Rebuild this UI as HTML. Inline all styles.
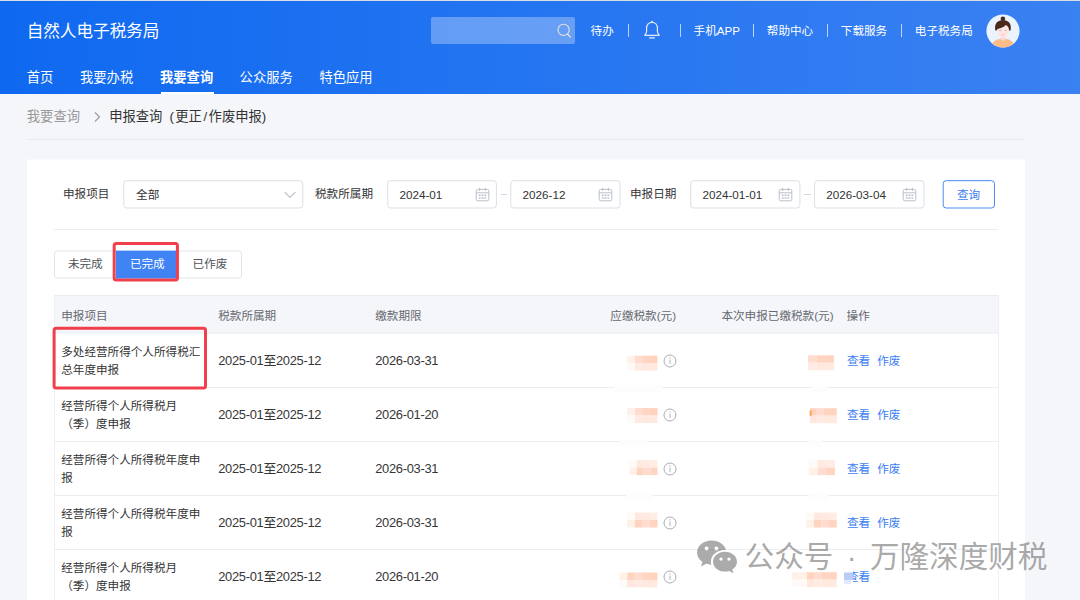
<!DOCTYPE html>
<html lang="zh-CN">
<head>
<meta charset="utf-8">
<title>自然人电子税务局</title>
<style>
*{box-sizing:border-box;margin:0;padding:0}
html,body{width:1080px;height:600px;overflow:hidden;background:#f5f6fa}
body{position:relative;font-family:"Liberation Sans","Noto Sans CJK SC",sans-serif;font-size:11.6px;color:#333}
.abs{position:absolute;white-space:nowrap}
.topline{left:0;top:0;width:1080px;height:1px;background:#d9dde4}
.hdr{left:0;top:1px;width:1080px;height:93px;background:linear-gradient(90deg,#0f69f0 0%,#3a81f2 100%)}
.logo{left:26.7px;top:20px;font-size:16.6px;line-height:24px;color:#fff}
.nav{top:66.5px;font-size:13.3px;line-height:22px;color:#fff}
.nav.on{font-weight:bold}
.navline{left:160.5px;top:91.6px;width:53.2px;height:2.4px;background:#fff}
.search{left:431.4px;top:17.4px;width:143.2px;height:26.6px;border-radius:2px;background:rgba(255,255,255,.3)}
.tl{top:22.4px;font-size:11.6px;line-height:18px;color:#fff}
.sep{top:24px;width:1px;height:13.4px;background:rgba(255,255,255,.68)}
.crumb{top:106.4px;font-size:13.3px;line-height:22px}
.hr1{left:27px;top:139px;width:998px;height:1px;background:#e6e8ee}
.card{left:27px;top:159px;width:998px;height:441px;background:linear-gradient(#f9fafc,#f9fafc) 0 0/100% 1px no-repeat #fff}
.lbl{top:183.8px;font-size:11.6px;line-height:20px;color:#333}
.itx{top:185px;font-size:11.7px;line-height:20px;color:#333}
.hr2{left:54px;top:229px;width:944px;height:1px;background:#ebedf2}
.tabt{top:254px;font-size:11.6px;line-height:20px;color:#505258;width:62px;text-align:center}
.red{border:3px solid #f13d48;border-radius:3px}
.th{left:54px;top:295px;width:944px;height:38px;background:#f5f6fa;border-top:1px solid #ebedf2;border-bottom:1px solid #ebedf2}
.tht{top:305.6px;font-size:11.6px;line-height:20px;color:#666970}
.row{left:54px;width:944px;height:1px;background:#ebedf2}
.vl{top:295px;width:1px;height:305px;background:#eef0f4}
.c1{left:61.2px;width:160px;white-space:normal;font-size:11.6px;line-height:17.4px;color:#333}
.c2{font-size:12.9px;line-height:20px;color:#363636;letter-spacing:-.3px}
.lnk{font-size:11.6px;line-height:20px;color:#3b7df3}
.wm{left:744.6px;top:537px;font-size:29.6px;line-height:40px;color:rgba(105,105,105,.58)}
</style>
</head>
<body>
<div class="abs hdr"></div>
<div class="abs topline"></div>
<div class="abs logo">自然人电子税务局</div>
<div class="abs nav" style="left:26.8px">首页</div>
<div class="abs nav" style="left:80px">我要办税</div>
<div class="abs nav on" style="left:160px">我要查询</div>
<div class="abs nav" style="left:239.6px">公众服务</div>
<div class="abs nav" style="left:319.4px">特色应用</div>
<div class="abs navline"></div>
<div class="abs search"></div>
<svg class="abs" style="left:555.4px;top:22px" width="18" height="18" viewBox="0 0 18 18"><circle cx="8.6" cy="7.9" r="5.6" fill="none" stroke="#e4e2d8" stroke-width="1.1"/><path d="M12.6 12 L15.3 15" stroke="#e4e2d8" stroke-width="1.2" stroke-linecap="round"/></svg>
<div class="abs tl" style="left:590.6px">待办</div>
<svg class="abs" style="left:642px;top:19.4px" width="20" height="22" viewBox="0 0 20 22"><path d="M2.8 16.3 C2.8 15.4 4.6 14.6 4.6 12.4 V9 C4.6 5.6 7 3.3 10 3.3 C13 3.3 15.4 5.6 15.4 9 V12.4 C15.4 14.6 17.2 15.4 17.2 16.3 Z" fill="none" stroke="#e3ecfd" stroke-width="1.2" stroke-linejoin="round"/><path d="M7.6 18.9 H12.4" stroke="#e3ecfd" stroke-width="1.2" stroke-linecap="round"/><circle cx="10" cy="2.7" r=".9" fill="#e3ecfd"/></svg>
<div class="abs sep" style="left:628px"></div>
<div class="abs sep" style="left:680px"></div>
<div class="abs sep" style="left:753px"></div>
<div class="abs sep" style="left:827px"></div>
<div class="abs sep" style="left:901px"></div>
<div class="abs tl" style="left:693.6px">手机APP</div>
<div class="abs tl" style="left:766.8px">帮助中心</div>
<div class="abs tl" style="left:840.8px">下载服务</div>
<div class="abs tl" style="left:914.8px">电子税务局</div>
<svg class="abs" style="left:986.2px;top:14px" width="34" height="34" viewBox="0 0 34 34">
<defs><clipPath id="av"><circle cx="17" cy="17" r="16.6"/></clipPath></defs>
<circle cx="17" cy="17" r="16.6" fill="#eaf3fe"/>
<g clip-path="url(#av)">
<path d="M5.2 34 C5.8 27 11 25.3 14 25.1 L20 25.1 C23 25.3 28.2 27 28.8 34 Z" fill="#fdbb86"/>
<path d="M14.5 21 H19.5 V25.3 C18.6 27.2 15.4 27.2 14.5 25.3 Z" fill="#fbd8d1"/>
<ellipse cx="17" cy="16.6" rx="5.9" ry="7.4" fill="#fde6e2"/>
<circle cx="16.9" cy="4.8" r="2.3" fill="#4a2a1c"/>
<path d="M9.3 16.2 C8 9.4 12 5.9 17 5.9 C22 5.9 26 9.4 24.6 16.2 C24 16.9 23.2 16.7 23 15.9 C22.8 13.5 21.6 11.7 19.8 11.1 C17.5 13.7 13.5 14.5 11.2 15.3 C11 16.5 10 16.9 9.3 16.2 Z" fill="#4a2a1c"/>
<ellipse cx="14.3" cy="16.2" rx=".8" ry=".5" fill="#9aa3b2"/><ellipse cx="19.6" cy="16.2" rx=".8" ry=".5" fill="#9aa3b2"/>
<path d="M16.1 20.9 H17.9" stroke="#f5a9a0" stroke-width=".7" stroke-linecap="round"/>
</g></svg>
<div class="abs crumb" style="left:26.8px;color:#999">我要查询</div>
<svg class="abs" style="left:92px;top:111.4px" width="10" height="12" viewBox="0 0 10 12"><path d="M3 1.5 L7.5 6 L3 10.5" fill="none" stroke="#999" stroke-width="1.1"/></svg>
<div class="abs crumb" style="left:109.2px;color:#333">申报查询<span style="margin:0 1.5px 0 7px">(</span>更正<span style="margin:0 1.5px">/</span>作废申报)</div>
<div class="abs hr1"></div>
<div class="abs card"></div>
<svg class="abs" style="left:0;top:0" width="1080" height="600" viewBox="0 0 1080 600">
<rect x="123.80" y="180.70" width="179.00" height="27.30" rx="3" fill="#fff" stroke="#dcdfe6" stroke-width="1"/>
<rect x="387.70" y="180.70" width="108.70" height="27.30" rx="3" fill="#fff" stroke="#dcdfe6" stroke-width="1"/>
<rect x="510.80" y="180.70" width="109.30" height="27.30" rx="3" fill="#fff" stroke="#dcdfe6" stroke-width="1"/>
<rect x="690.70" y="180.70" width="109.20" height="27.30" rx="3" fill="#fff" stroke="#dcdfe6" stroke-width="1"/>
<rect x="814.50" y="180.70" width="109.50" height="27.30" rx="3" fill="#fff" stroke="#dcdfe6" stroke-width="1"/>
<rect x="943.20" y="180.70" width="51.30" height="27.30" rx="3" fill="#fff" stroke="#4a8af5" stroke-width="1"/>
<path d="M116.5 251 H57.5 a3 3 0 0 0 -3 3 V275 a3 3 0 0 0 3 3 H116.5 Z" fill="#fff" stroke="#e2e4ea"/>
<path d="M178 251 H238.5 a3 3 0 0 1 3 3 V275 a3 3 0 0 1 -3 3 H178 Z" fill="#fff" stroke="#e2e4ea"/>
<rect x="116" y="250.6" width="62.5" height="28" fill="#3f83f4"/>
</svg>
<div class="abs lbl" style="left:63px">申报项目</div>
<div class="abs itx" style="left:136px">全部</div>
<svg class="abs" style="left:283px;top:190px" width="14" height="10" viewBox="0 0 14 10"><path d="M1.5 2 L7 7.5 L12.5 2" fill="none" stroke="#c0c4cc" stroke-width="1.1"/></svg>
<div class="abs lbl" style="left:315px">税款所属期</div>
<div class="abs lbl" style="left:630px">申报日期</div>
<div class="abs itx" style="left:399.4px">2024-01</div>
<div class="abs itx" style="left:522.6px">2026-12</div>
<div class="abs itx" style="left:702.4px">2024-01-01</div>
<div class="abs itx" style="left:826.2px">2026-03-04</div>
<div class="abs" style="left:500.6px;top:193.6px;width:6.6px;height:1px;background:#d2d5dc"></div>
<div class="abs" style="left:804.2px;top:193.6px;width:6.6px;height:1px;background:#d2d5dc"></div>
<svg class="abs" style="left:474.7px;top:187.3px" width="15" height="15" viewBox="0 0 15 15"><rect x="1.2" y="2.4" width="12.6" height="11.4" rx="1.4" fill="none" stroke="#b9bfcb" stroke-width="1"/><path d="M1.2 5.8 H13.8 M4.6 .8 V3.8 M10.4 .8 V3.8" stroke="#b9bfcb" stroke-width="1" fill="none"/><path d="M3.8 8.3 H5.6 M6.6 8.3 H8.4 M9.4 8.3 H11.2 M3.8 11 H5.6 M6.6 11 H8.4 M9.4 11 H11.2" stroke="#b9bfcb" stroke-width="1.4"/></svg>
<svg class="abs" style="left:598.2px;top:187.3px" width="15" height="15" viewBox="0 0 15 15"><rect x="1.2" y="2.4" width="12.6" height="11.4" rx="1.4" fill="none" stroke="#b9bfcb" stroke-width="1"/><path d="M1.2 5.8 H13.8 M4.6 .8 V3.8 M10.4 .8 V3.8" stroke="#b9bfcb" stroke-width="1" fill="none"/><path d="M3.8 8.3 H5.6 M6.6 8.3 H8.4 M9.4 8.3 H11.2 M3.8 11 H5.6 M6.6 11 H8.4 M9.4 11 H11.2" stroke="#b9bfcb" stroke-width="1.4"/></svg>
<svg class="abs" style="left:778.2px;top:187.3px" width="15" height="15" viewBox="0 0 15 15"><rect x="1.2" y="2.4" width="12.6" height="11.4" rx="1.4" fill="none" stroke="#b9bfcb" stroke-width="1"/><path d="M1.2 5.8 H13.8 M4.6 .8 V3.8 M10.4 .8 V3.8" stroke="#b9bfcb" stroke-width="1" fill="none"/><path d="M3.8 8.3 H5.6 M6.6 8.3 H8.4 M9.4 8.3 H11.2 M3.8 11 H5.6 M6.6 11 H8.4 M9.4 11 H11.2" stroke="#b9bfcb" stroke-width="1.4"/></svg>
<svg class="abs" style="left:902px;top:187.3px" width="15" height="15" viewBox="0 0 15 15"><rect x="1.2" y="2.4" width="12.6" height="11.4" rx="1.4" fill="none" stroke="#b9bfcb" stroke-width="1"/><path d="M1.2 5.8 H13.8 M4.6 .8 V3.8 M10.4 .8 V3.8" stroke="#b9bfcb" stroke-width="1" fill="none"/><path d="M3.8 8.3 H5.6 M6.6 8.3 H8.4 M9.4 8.3 H11.2 M3.8 11 H5.6 M6.6 11 H8.4 M9.4 11 H11.2" stroke="#b9bfcb" stroke-width="1.4"/></svg>
<div class="abs lnk" style="left:957px;top:185px">查询</div>
<div class="abs hr2"></div>
<div class="abs tabt" style="left:54.3px">未完成</div>
<div class="abs tabt" style="left:116.3px;color:#fff">已完成</div>
<div class="abs tabt" style="left:179px">已作废</div>
<svg class="abs" style="left:0;top:0" width="1080" height="600" viewBox="0 0 1080 600"><rect x="54" y="295.1" width="944" height="38.2" fill="#f5f6fa"/><rect x="54" y="295.1" width="944" height="1" fill="#ebedf2"/><rect x="54" y="332.5" width="944" height="1" fill="#eceef3"/></svg>
<div class="abs vl" style="left:54px"></div><div class="abs vl" style="left:998px"></div>
<div class="abs tht" style="left:61.2px">申报项目</div>
<div class="abs tht" style="left:218.2px">税款所属期</div>
<div class="abs tht" style="left:375.2px">缴款期限</div>
<div class="abs tht" style="right:404px">应缴税款(元)</div>
<div class="abs tht" style="right:246.5px">本次申报已缴税款(元)</div>
<div class="abs tht" style="left:846.6px">操作</div>
<div class="abs row" style="top:387.2px"></div>
<div class="abs row" style="top:441.2px"></div>
<div class="abs row" style="top:495.2px"></div>
<div class="abs row" style="top:549.2px"></div>
<div class="abs row" style="top:603.2px"></div>
<svg class="abs" style="left:0;top:0" width="1080" height="600" viewBox="0 0 1080 600">
<rect x="649.8" y="355.7" width="7.699999999999994" height="7.5" fill="#ffd3be"/>
<rect x="642.2" y="355.7" width="7.699999999999994" height="7.5" fill="#ffd5c1"/>
<rect x="634.6" y="355.7" width="7.699999999999994" height="7.5" fill="#ffdccf"/>
<rect x="627.0" y="355.7" width="7.699999999999994" height="7.5" fill="#fff1e8"/>
<rect x="649.8" y="363.1" width="7.699999999999994" height="7.5" fill="#ffe9e0"/>
<rect x="642.2" y="363.1" width="7.699999999999994" height="7.5" fill="#ffe8de"/>
<rect x="634.6" y="363.1" width="7.699999999999994" height="7.5" fill="#ffebe3"/>
<rect x="627.0" y="363.1" width="7.699999999999994" height="7.5" fill="#fffaf7"/>
<rect x="649.8" y="408.0" width="7.699999999999994" height="7.5" fill="#ffd3be"/>
<rect x="642.2" y="408.0" width="7.699999999999994" height="7.5" fill="#ffd5c1"/>
<rect x="634.6" y="408.0" width="7.699999999999994" height="7.5" fill="#ffdccf"/>
<rect x="627.0" y="408.0" width="7.699999999999994" height="7.5" fill="#fff1e8"/>
<rect x="649.8" y="415.4" width="7.699999999999994" height="7.5" fill="#ffe9e0"/>
<rect x="642.2" y="415.4" width="7.699999999999994" height="7.5" fill="#ffe8de"/>
<rect x="634.6" y="415.4" width="7.699999999999994" height="7.5" fill="#ffebe3"/>
<rect x="627.0" y="415.4" width="7.699999999999994" height="7.5" fill="#fffaf7"/>
<rect x="650.4" y="460.2" width="7.1" height="7.5" fill="#ffece4"/>
<rect x="643.4" y="460.2" width="7.1" height="7.5" fill="#ffe9e0"/>
<rect x="636.4" y="460.2" width="7.1" height="7.5" fill="#ffe8de"/>
<rect x="629.4" y="460.2" width="7.1" height="7.5" fill="#fffaf7"/>
<rect x="650.4" y="467.6" width="7.1" height="7.5" fill="#ffd5c1"/>
<rect x="643.4" y="467.6" width="7.1" height="7.5" fill="#ffdccf"/>
<rect x="636.4" y="467.6" width="7.1" height="7.5" fill="#ffd4bf"/>
<rect x="629.4" y="467.6" width="7.1" height="7.5" fill="#fff1e8"/>
<rect x="649.8" y="512.6" width="7.699999999999994" height="7.5" fill="#ffece4"/>
<rect x="642.2" y="512.6" width="7.699999999999994" height="7.5" fill="#ffe9e0"/>
<rect x="634.6" y="512.6" width="7.699999999999994" height="7.5" fill="#ffe8de"/>
<rect x="627.0" y="512.6" width="7.699999999999994" height="7.5" fill="#fffaf7"/>
<rect x="649.8" y="520.0" width="7.699999999999994" height="7.5" fill="#ffd5c1"/>
<rect x="642.2" y="520.0" width="7.699999999999994" height="7.5" fill="#ffdccf"/>
<rect x="634.6" y="520.0" width="7.699999999999994" height="7.5" fill="#ffd4bf"/>
<rect x="627.0" y="520.0" width="7.699999999999994" height="7.5" fill="#fff1e8"/>
<rect x="649.8" y="572.5" width="7.679999999999995" height="7.5" fill="#ffd3be"/>
<rect x="642.2" y="572.5" width="7.679999999999995" height="7.5" fill="#ffd5c1"/>
<rect x="634.7" y="572.5" width="7.679999999999995" height="7.5" fill="#ffdccf"/>
<rect x="627.1" y="572.5" width="7.679999999999995" height="7.5" fill="#ffd4bf"/>
<rect x="619.5" y="572.5" width="7.679999999999995" height="7.5" fill="#fff1e8"/>
<rect x="649.8" y="579.9" width="7.679999999999995" height="7.5" fill="#ffe9e0"/>
<rect x="642.2" y="579.9" width="7.679999999999995" height="7.5" fill="#ffe8de"/>
<rect x="634.7" y="579.9" width="7.679999999999995" height="7.5" fill="#ffebe3"/>
<rect x="627.1" y="579.9" width="7.679999999999995" height="7.5" fill="#ffe7dd"/>
<rect x="619.5" y="579.9" width="7.679999999999995" height="7.5" fill="#fffaf7"/>
<rect x="825.2" y="355.3" width="8.699999999999985" height="7.5" fill="#ffd3be"/>
<rect x="816.6" y="355.3" width="8.699999999999985" height="7.5" fill="#ffd5c1"/>
<rect x="808.0" y="355.3" width="8.699999999999985" height="7.5" fill="#ffdccf"/>
<rect x="825.2" y="362.7" width="8.699999999999985" height="7.5" fill="#ffe9e0"/>
<rect x="816.6" y="362.7" width="8.699999999999985" height="7.5" fill="#ffe8de"/>
<rect x="808.0" y="362.7" width="8.699999999999985" height="7.5" fill="#ffebe3"/>
<rect x="830.0" y="408.2" width="6.750000000000005" height="7.5" fill="#ffd3be"/>
<rect x="823.3" y="408.2" width="6.750000000000005" height="7.5" fill="#ffd5c1"/>
<rect x="816.6" y="408.2" width="6.750000000000005" height="7.5" fill="#ffdccf"/>
<rect x="810.0" y="408.2" width="6.750000000000005" height="7.5" fill="#ffd4bf"/>
<rect x="830.0" y="415.6" width="6.750000000000005" height="7.5" fill="#ffe9e0"/>
<rect x="823.3" y="415.6" width="6.750000000000005" height="7.5" fill="#ffe8de"/>
<rect x="816.6" y="415.6" width="6.750000000000005" height="7.5" fill="#ffebe3"/>
<rect x="810.0" y="415.6" width="6.750000000000005" height="7.5" fill="#ffe7dd"/>
<rect x="826.1" y="460.2" width="8.766666666666666" height="7.5" fill="#ffece4"/>
<rect x="817.5" y="460.2" width="8.766666666666666" height="7.5" fill="#ffe9e0"/>
<rect x="808.8" y="460.2" width="8.766666666666666" height="7.5" fill="#fffaf7"/>
<rect x="826.1" y="467.6" width="8.766666666666666" height="7.5" fill="#ffd5c1"/>
<rect x="817.5" y="467.6" width="8.766666666666666" height="7.5" fill="#ffdccf"/>
<rect x="808.8" y="467.6" width="8.766666666666666" height="7.5" fill="#fff1e8"/>
<rect x="829.0" y="512.6" width="7.750000000000005" height="7.5" fill="#ffece4"/>
<rect x="821.3" y="512.6" width="7.750000000000005" height="7.5" fill="#ffe9e0"/>
<rect x="813.6" y="512.6" width="7.750000000000005" height="7.5" fill="#ffe8de"/>
<rect x="806.0" y="512.6" width="7.750000000000005" height="7.5" fill="#fffaf7"/>
<rect x="829.0" y="520.0" width="7.750000000000005" height="7.5" fill="#ffd5c1"/>
<rect x="821.3" y="520.0" width="7.750000000000005" height="7.5" fill="#ffdccf"/>
<rect x="813.6" y="520.0" width="7.750000000000005" height="7.5" fill="#ffd4bf"/>
<rect x="806.0" y="520.0" width="7.750000000000005" height="7.5" fill="#fff1e8"/>
<rect x="829.2" y="572.2" width="7.533333333333337" height="7.5" fill="#ffd3be"/>
<rect x="821.7" y="572.2" width="7.533333333333337" height="7.5" fill="#ffd5c1"/>
<rect x="814.3" y="572.2" width="7.533333333333337" height="7.5" fill="#ffdccf"/>
<rect x="806.9" y="572.2" width="7.533333333333337" height="7.5" fill="#ffd4bf"/>
<rect x="799.4" y="572.2" width="7.533333333333337" height="7.5" fill="#fff1e8"/>
<rect x="792.0" y="572.2" width="7.533333333333337" height="7.5" fill="#fff1e8"/>
<rect x="829.2" y="579.6" width="7.533333333333337" height="7.5" fill="#ffe9e0"/>
<rect x="821.7" y="579.6" width="7.533333333333337" height="7.5" fill="#ffe8de"/>
<rect x="814.3" y="579.6" width="7.533333333333337" height="7.5" fill="#ffebe3"/>
<rect x="806.9" y="579.6" width="7.533333333333337" height="7.5" fill="#ffe7dd"/>
<rect x="799.4" y="579.6" width="7.533333333333337" height="7.5" fill="#fffaf7"/>
<rect x="792.0" y="579.6" width="7.533333333333337" height="7.5" fill="#fffaf7"/>
<rect x="809.6" y="410.2" width="2" height="6" rx="1" fill="#f9a45c"/>
<rect x="844" y="572.5" width="9.4" height="7.6" fill="#b9cbf9"/><rect x="844" y="580" width="7" height="4" fill="#e3eafd"/>
<rect x="614" y="385.4" width="48" height="7" fill="#fdfdfe"/>
<rect x="620" y="439.4" width="28" height="7" fill="#fdfdfe"/>
<rect x="626" y="493.3" width="26" height="7" fill="#fdfdfe"/>
<rect x="811" y="385.4" width="17" height="7" fill="#fdfdfe"/>
<rect x="808" y="439.4" width="14" height="7" fill="#fdfdfe"/>
<rect x="809" y="493.3" width="19" height="7" fill="#fdfdfe"/>
</svg>
<div class="abs c1" style="top:343.3px">多处经营所得个人所得税汇<br>总年度申报</div>
<div class="abs c2" style="left:218.2px;top:350.7px">2025-01至2025-12</div>
<div class="abs c2" style="left:375.2px;top:350.7px">2026-03-31</div>
<svg class="abs" style="left:662.6px;top:353.5px" width="14" height="14" viewBox="0 0 14 14"><circle cx="7" cy="7" r="6" fill="#fff" stroke="#a6a9b0" stroke-width=".95"/><path d="M7 5.6 V9.9" stroke="#a6a9b0" stroke-width=".9"/><circle cx="7" cy="3.9" r=".6" fill="#a6a9b0"/></svg>
<div class="abs lnk" style="left:847px;top:350.7px">查看</div>
<div class="abs lnk" style="left:877.2px;top:350.7px">作废</div>
<div class="abs c1" style="top:397.3px">经营所得个人所得税月<br>（季）度申报</div>
<div class="abs c2" style="left:218.2px;top:404.7px">2025-01至2025-12</div>
<div class="abs c2" style="left:375.2px;top:404.7px">2026-01-20</div>
<svg class="abs" style="left:662.6px;top:407.5px" width="14" height="14" viewBox="0 0 14 14"><circle cx="7" cy="7" r="6" fill="#fff" stroke="#a6a9b0" stroke-width=".95"/><path d="M7 5.6 V9.9" stroke="#a6a9b0" stroke-width=".9"/><circle cx="7" cy="3.9" r=".6" fill="#a6a9b0"/></svg>
<div class="abs lnk" style="left:847px;top:404.7px">查看</div>
<div class="abs lnk" style="left:877.2px;top:404.7px">作废</div>
<div class="abs c1" style="top:451.3px">经营所得个人所得税年度申<br>报</div>
<div class="abs c2" style="left:218.2px;top:458.7px">2025-01至2025-12</div>
<div class="abs c2" style="left:375.2px;top:458.7px">2026-03-31</div>
<svg class="abs" style="left:662.6px;top:461.5px" width="14" height="14" viewBox="0 0 14 14"><circle cx="7" cy="7" r="6" fill="#fff" stroke="#a6a9b0" stroke-width=".95"/><path d="M7 5.6 V9.9" stroke="#a6a9b0" stroke-width=".9"/><circle cx="7" cy="3.9" r=".6" fill="#a6a9b0"/></svg>
<div class="abs lnk" style="left:847px;top:458.7px">查看</div>
<div class="abs lnk" style="left:877.2px;top:458.7px">作废</div>
<div class="abs c1" style="top:505.3px">经营所得个人所得税年度申<br>报</div>
<div class="abs c2" style="left:218.2px;top:512.7px">2025-01至2025-12</div>
<div class="abs c2" style="left:375.2px;top:512.7px">2026-03-31</div>
<svg class="abs" style="left:662.6px;top:515.5px" width="14" height="14" viewBox="0 0 14 14"><circle cx="7" cy="7" r="6" fill="#fff" stroke="#a6a9b0" stroke-width=".95"/><path d="M7 5.6 V9.9" stroke="#a6a9b0" stroke-width=".9"/><circle cx="7" cy="3.9" r=".6" fill="#a6a9b0"/></svg>
<div class="abs lnk" style="left:847px;top:512.7px">查看</div>
<div class="abs lnk" style="left:877.2px;top:512.7px">作废</div>
<div class="abs c1" style="top:559.3px">经营所得个人所得税月<br>（季）度申报</div>
<div class="abs c2" style="left:218.2px;top:566.7px">2025-01至2025-12</div>
<div class="abs c2" style="left:375.2px;top:566.7px">2026-01-20</div>
<svg class="abs" style="left:662.6px;top:569.5px" width="14" height="14" viewBox="0 0 14 14"><circle cx="7" cy="7" r="6" fill="#fff" stroke="#a6a9b0" stroke-width=".95"/><path d="M7 5.6 V9.9" stroke="#a6a9b0" stroke-width=".9"/><circle cx="7" cy="3.9" r=".6" fill="#a6a9b0"/></svg>
<div class="abs lnk" style="left:847px;top:566.7px;clip-path:inset(0 0 0 6px)">查看</div>
<svg class="abs" style="left:0;top:0" width="1080" height="600" viewBox="0 0 1080 600"><g fill="none" stroke="#f1404b" stroke-width="3"><rect x="114.2" y="243.6" width="63.2" height="36.3" rx="2"/><rect x="54.1" y="328.3" width="151.4" height="59.6" rx="2"/></g></svg>
<svg class="abs" style="left:696px;top:539px" width="43" height="35" viewBox="0 0 43 35"><g fill="rgba(105,105,105,.56)"><path d="M15.5 1.5 C7.5 1.5 1 6.9 1 13.6 C1 17.4 3.1 20.8 6.4 23 L5 27.6 L10.2 24.8 C11.8 25.3 13.5 25.6 15.3 25.7 C15 24.7 14.9 23.7 14.9 22.6 C14.9 16.2 21 11 28.5 11 C29 11 29.5 11 30 11.1 C28.8 5.6 22.8 1.5 15.5 1.5 Z M10.6 7.6 a2 2 0 1 1 0 4 a2 2 0 0 1 0 -4 Z M20.4 7.6 a2 2 0 1 1 0 4 a2 2 0 0 1 0 -4 Z"/><path d="M29 12.8 C22.4 12.8 17 17.2 17 22.7 C17 28.2 22.4 32.6 29 32.6 C30.5 32.6 31.9 32.4 33.2 32 L37.4 34.3 L36.3 30.5 C39.1 28.7 41 25.9 41 22.7 C41 17.2 35.6 12.8 29 12.8 Z M25 18.4 a1.7 1.7 0 1 1 0 3.4 a1.7 1.7 0 0 1 0 -3.4 Z M33 18.4 a1.7 1.7 0 1 1 0 3.4 a1.7 1.7 0 0 1 0 -3.4 Z"/></g></svg>
<div class="abs wm">公众号<span style="display:inline-block;width:36.5px;text-align:center">·</span>万隆深度财税</div>
</body>
</html>
